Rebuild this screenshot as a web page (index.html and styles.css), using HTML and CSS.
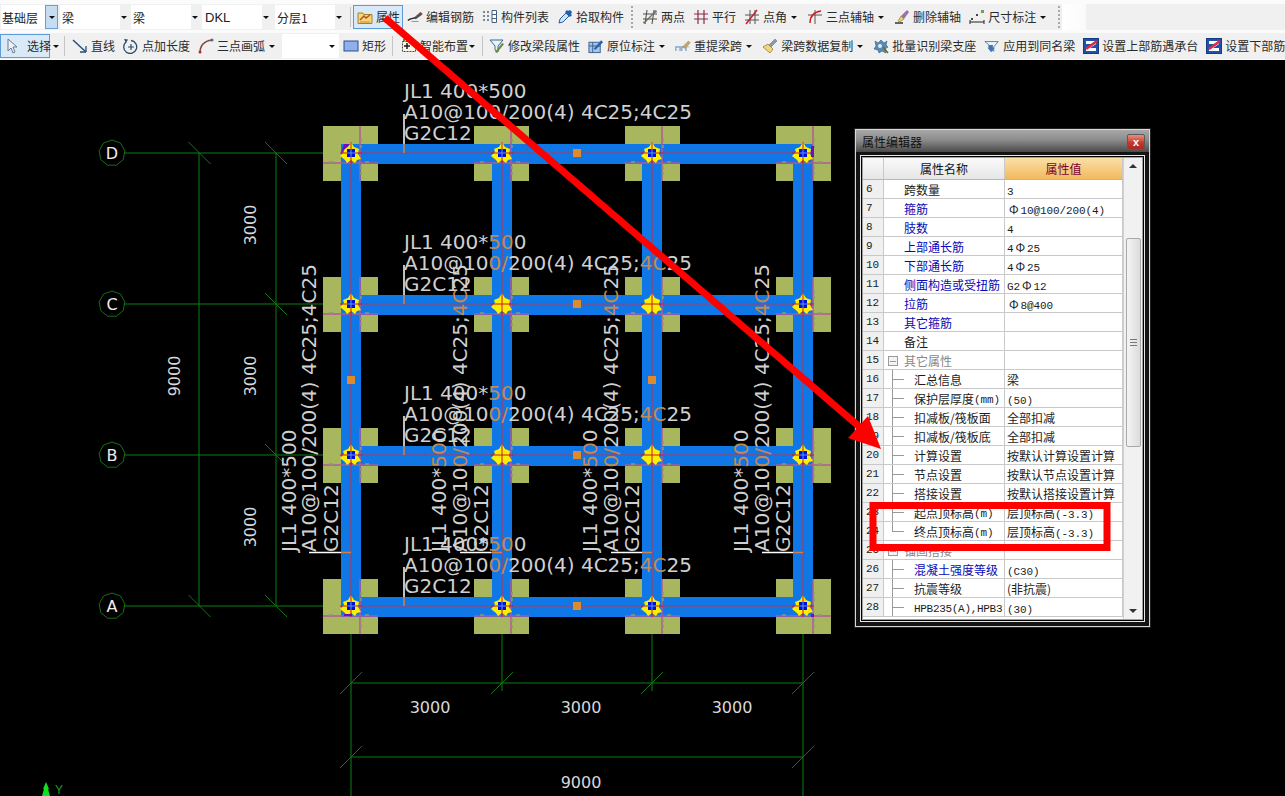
FILE: index.html
```html
<!DOCTYPE html>
<html lang="zh">
<head>
<meta charset="utf-8">
<title>属性编辑器</title>
<link rel="stylesheet" href="styles.css">
</head>
<body>
<svg class="defs" width="0" height="0" aria-hidden="true">
  <defs>
    <symbol id="i-prop" viewBox="0 0 16 16"><path d="M1 4h5l1 1.500h8v9H1z" fill="#f5d67a" stroke="#a8802c"/><path d="M3 11l4-4 2 2 4-3" fill="none" stroke="#b5541a" stroke-width="1.500"/><path d="M3 13h10" stroke="#d9a441" stroke-width="1.500"/></symbol>
    <symbol id="i-rebar" viewBox="0 0 18 16"><path d="M1 12c3-3 5-2 8-3" fill="none" stroke="#222" stroke-width="1.500"/><path d="M8 9l7-6 2 2-7 5z" fill="#555" stroke="#222" stroke-width=".6"/><path d="M15 3l2 2" stroke="#c33" stroke-width="1.500"/><path d="M5 13h8" stroke="#888"/></symbol>
    <symbol id="i-list" viewBox="0 0 16 16"><path d="M1 2h2v2H1zM1 6h2v2H1zM1 10h2v2H1zM5 2h2v2H5zM5 6h2v2H5zM5 10h2v2H5z" fill="#7a8a9a"/><path d="M10 1.500h4.500v12H10zM10 5.500h4.500M10 9.500h4.500" fill="#fff" stroke="#44607c"/></symbol>
    <symbol id="i-pick" viewBox="0 0 16 16"><path d="M2 14l1-4 6-6 3 3-6 6z" fill="#cfe4f7" stroke="#2a5d9c"/><path d="M8 3l5 5 2-2-1-1 1-2-2-2-2 1-1-1z" fill="#1f5fae"/></symbol>
    <symbol id="i-two" viewBox="0 0 16 16"><path d="M1 5h14M1 10h14M5 1l-2 14M12 1l-2 14" stroke="#4a4a4a" fill="none"/><path d="M2 14L14 2" stroke="#7a6a5a" stroke-width="1.200"/><circle cx="2.500" cy="13.500" r="1.300" fill="#777"/><circle cx="13.500" cy="2.500" r="1.300" fill="#777"/></symbol>
    <symbol id="i-par" viewBox="0 0 16 16"><path d="M1 5h14M1 10h14M5 1v14M11 1v14" stroke="#8a2a4a" stroke-width="1.200" fill="none"/></symbol>
    <symbol id="i-ang" viewBox="0 0 16 16"><path d="M1 6h14M1 11h14M6 1v14M11 1v14" stroke="#555" fill="none"/><path d="M2 15L13 1" stroke="#c0202a" stroke-width="1.500"/></symbol>
    <symbol id="i-tri" viewBox="0 0 16 16"><path d="M1 6h14M8 1v14" stroke="#555" fill="none"/><path d="M3 14C3 7 7 3 14 2" stroke="#d02020" stroke-width="1.500" fill="none"/></symbol>
    <symbol id="i-del" viewBox="0 0 16 16"><path d="M1 14h8" stroke="#333" stroke-width="1.500"/><path d="M4 12l3-5 3 3-4 3z" fill="#e8d070" stroke="#8a7030" stroke-width=".6"/><path d="M7 7l6-6 2 2-5 7z" fill="#9a70b0"/></symbol>
    <symbol id="i-dim" viewBox="0 0 16 16"><path d="M1 11v4M15 11v4M1 13h14" stroke="#222" fill="none"/><path d="M2 9h2v2H2zM7 5h2v2H7z" fill="#444"/><path d="M12 1h3v3h-3z" fill="#7a9a5a"/></symbol>
    <symbol id="i-sel" viewBox="0 0 16 16"><path d="M4 1v12l3-3 2 5 2-1-2-5h4z" fill="#eef2f8" stroke="#6a7a8e"/></symbol>
    <symbol id="i-line" viewBox="0 0 16 16"><path d="M1 2l13 12" stroke="#24507c" stroke-width="1.500"/><path d="M14 14v-6M14 14H8" stroke="#24507c" stroke-width="1.300" fill="none"/></symbol>
    <symbol id="i-plus" viewBox="0 0 16 16"><path d="M3 4a6.500 6.500 0 1 0 5-1.500" fill="none" stroke="#2a4a6c" stroke-width="1.300"/><path d="M1 1l4 .5L3 5z" fill="#2a4a6c"/><path d="M8 6v6M5 9h6" stroke="#2a4a6c" stroke-width="1.200"/></symbol>
    <symbol id="i-arc" viewBox="0 0 16 16"><path d="M2 15C2 8 6 3 14 2" fill="none" stroke="#8a4a3a" stroke-width="1.500"/><circle cx="2" cy="14" r="1.500" fill="#b03030"/><circle cx="14" cy="2" r="1.500" fill="#4a6a9a"/></symbol>
    <symbol id="i-rect" viewBox="0 0 16 16"><rect x="1" y="3" width="14" height="10" fill="#8fb0e8" stroke="#2a4f96"/></symbol>
    <symbol id="i-smart" viewBox="0 0 16 16"><rect x="1.500" y="3.500" width="13" height="10" fill="#f6f6e8" stroke="#444" stroke-dasharray="2 1"/><path d="M6 5v6M3 8h6" stroke="#1a1a1a" stroke-width="1.500"/><path d="M2 1h2v2H2z" fill="#6a8a3a"/></symbol>
    <symbol id="i-fun" viewBox="0 0 16 16"><path d="M1 2h13L9 8v6L6 12V8z" fill="#e8f2fa" stroke="#3a6a8a"/><path d="M6 14l7-9 2 1-7 9z" fill="#6a8a4a"/></symbol>
    <symbol id="i-org" viewBox="0 0 17 16"><rect x="1" y="4" width="12" height="11" fill="#a8c4e8" stroke="#3a5f8e"/><path d="M1 8h12M5 4v11" stroke="#3a5f8e"/><path d="M6 11l8-9 2 2-8 8z" fill="#2a62b0"/></symbol>
    <symbol id="i-span" viewBox="0 0 19 16"><path d="M1 14V9h5v5M8 14V9h5v5" fill="none" stroke="#7aa0c8" stroke-width="1.500"/><path d="M1 9h16" stroke="#9ab4d0"/><path d="M9 9l7-7 2 2-6 7z" fill="#c8a868" stroke="#8a7040" stroke-width=".5"/></symbol>
    <symbol id="i-brush" viewBox="0 0 16 16"><path d="M1 9l5-3 5 5-3 4z" fill="#f0d878" stroke="#8a7030" stroke-width=".7"/><path d="M7 7l6-6 2 2-6 6z" fill="#8a9aa8" stroke="#5a6a78" stroke-width=".5"/></symbol>
    <symbol id="i-batch" viewBox="0 0 16 16"><path d="M2 3l3 2 3-3 3 3 3-2-1 4 2 2-3 2 1 4-4-2-3 2-1-3-4-1 2-3z" fill="#5a8ab0" stroke="#2f5f86" stroke-width=".6"/><path d="M10 9l5 6" stroke="#6a6a2a" stroke-width="1.500"/><circle cx="7" cy="8" r="2" fill="#dcebf5"/></symbol>
    <symbol id="i-same" viewBox="0 0 18 16"><path d="M1 3h15L11 9v5L8 12V9z" fill="#eaf2f8" stroke="#4a7a9a"/><path d="M5 7h5v3h2l-4 5-4-5h1z" fill="#3f74b8"/></symbol>
    <symbol id="i-z" viewBox="0 0 16 16"><rect x=".5" y=".5" width="15" height="15" fill="#1f52a8" stroke="#163c80"/><path d="M3 3h10v3L7 10h6v3H3v-3l6-4H3z" fill="#fff"/><path d="M3 11L14 3" stroke="#e0283c" stroke-width="2.500"/></symbol>
    <polygon id="ring" points="0,-13 8.400,-10 12.800,-2.300 11.300,6.500 4.400,12.200 -4.400,12.200 -11.300,6.500 -12.800,-2.300 -8.400,-10" class="ring"/>
    <g id="tick"><path d="M-11 -11L11 11" class="thin"/></g>
    <g id="tock"><path d="M-11 11L11 -11" class="thin"/></g>
    <g id="pad">
      <rect x="-28" y="-27" width="55" height="55" class="pad"/>
    </g>
    <g id="wire">
      <path d="M-28 10H27M9 -27V28" class="wire"/>
      <path d="M-22 9h4M14 9h4M10 -14v3M10 -8v3M10 13v3M10 19v3" class="crumbs"/>
    </g>
    <g id="star">
      <polygon points="0,-11 3,-6 8,-4 7,1 10,6 6,7 4,10 0,7 -4,10 -6,7 -11,3 -7,-1 -8,-4 -3,-6" class="star"/>
      <path d="M-11 0H11M0 -11V11" class="core"/>
    </g>
    <g id="starb">
      <use href="#star"/>
      <rect x="-4" y="-4" width="8" height="8" class="blue"/>
      <path d="M-4 0H4M0 -4V4" class="core-in"/>
    </g>
  </defs>
</svg>

<header class="toolbars">
  <div class="bar bar-top">
    <div class="combo combo-first"><span>基础层</span><b class="drop"><i class="caret"></i></b></div>
    <div class="combo"><span>梁</span><i class="caret"></i></div>
    <div class="combo"><span>梁</span><i class="caret"></i></div>
    <div class="combo"><span class="lat">DKL</span><i class="caret"></i></div>
    <div class="combo combo-last"><span>分层1</span><i class="caret"></i></div>
    <i class="sep sep-top"></i>
    <div class="tool on"><svg class="ico"><use href="#i-prop"/></svg><span>属性</span></div>
    <div class="tool"><svg class="ico"><use href="#i-rebar"/></svg><span>编辑钢筋</span></div>
    <div class="tool"><svg class="ico"><use href="#i-list"/></svg><span>构件列表</span></div>
    <div class="tool"><svg class="ico"><use href="#i-pick"/></svg><span>拾取构件</span></div>
    <i class="grip"></i>
    <div class="tool"><svg class="ico"><use href="#i-two"/></svg><span>两点</span></div>
    <div class="tool"><svg class="ico"><use href="#i-par"/></svg><span>平行</span></div>
    <div class="tool"><svg class="ico"><use href="#i-ang"/></svg><span>点角</span><i class="caret"></i></div>
    <div class="tool"><svg class="ico"><use href="#i-tri"/></svg><span>三点辅轴</span><i class="caret"></i></div>
    <div class="tool"><svg class="ico"><use href="#i-del"/></svg><span>删除辅轴</span></div>
    <div class="tool"><svg class="ico"><use href="#i-dim"/></svg><span>尺寸标注</span><i class="caret"></i></div>
    <i class="grip grip-end"></i>
    <i class="blank"></i>
  </div>
  <div class="bar bar-low">
    <div class="tool on tool-sel"><svg class="ico"><use href="#i-sel"/></svg><span>选择</span></div>
    <i class="caret caret-sel"></i>
    <i class="sep sep-a"></i>
    <div class="tool"><svg class="ico"><use href="#i-line"/></svg><span>直线</span></div>
    <div class="tool"><svg class="ico"><use href="#i-plus"/></svg><span>点加长度</span></div>
    <div class="tool"><svg class="ico"><use href="#i-arc"/></svg><span>三点画弧</span><i class="caret"></i></div>
    <div class="combo combo-mini"><i class="caret"></i></div>
    <div class="tool"><svg class="ico"><use href="#i-rect"/></svg><span>矩形</span></div>
    <i class="sep sep-b"></i>
    <div class="tool tool-tight"><svg class="ico"><use href="#i-smart"/></svg><span>智能布置</span><i class="caret"></i></div>
    <i class="sep sep-c"></i>
    <div class="tool"><svg class="ico"><use href="#i-fun"/></svg><span>修改梁段属性</span></div>
    <div class="tool"><svg class="ico"><use href="#i-org"/></svg><span>原位标注</span><i class="caret"></i></div>
    <div class="tool"><svg class="ico"><use href="#i-span"/></svg><span>重提梁跨</span><i class="caret"></i></div>
    <div class="tool"><svg class="ico"><use href="#i-brush"/></svg><span>梁跨数据复制</span><i class="caret"></i></div>
    <div class="tool"><svg class="ico"><use href="#i-batch"/></svg><span>批量识别梁支座</span></div>
    <div class="tool"><svg class="ico"><use href="#i-same"/></svg><span>应用到同名梁</span></div>
    <div class="tool"><svg class="ico"><use href="#i-z"/></svg><span>设置上部筋遇承台</span></div>
    <div class="tool"><svg class="ico"><use href="#i-z"/></svg><span>设置下部筋遇承台</span></div>
  </div>
</header>

<main class="canvas">
  <svg class="plan" width="1285" height="736" viewBox="0 60 1285 736">
    <!-- axes -->
    <path class="axis" d="M124 153H351M124 304H351M124 455H351M124 606H351M199 153V606M276 153V606"/>
    <path class="axis" d="M351 606V796M502 606V691M652 606V691M803 606V796M351 683H803M351 757H803"/>
    <use href="#ring" x="112" y="153"/><use href="#ring" x="112" y="304"/><use href="#ring" x="112" y="455"/><use href="#ring" x="112" y="606"/>
    <use href="#tick" x="199.500" y="153"/><use href="#tick" x="276" y="153"/><use href="#tick" x="276" y="304"/><use href="#tick" x="276" y="455"/><use href="#tick" x="199.500" y="606"/><use href="#tick" x="276" y="606"/>
    <use href="#tock" x="351" y="683"/><use href="#tock" x="502" y="683"/><use href="#tock" x="652" y="683"/><use href="#tock" x="803" y="683"/><use href="#tock" x="351" y="757"/><use href="#tock" x="803" y="757"/>
    <text class="tag" x="112" y="159">D</text><text class="tag" x="112" y="310">C</text><text class="tag" x="112" y="461">B</text><text class="tag" x="112" y="612">A</text>
    <text class="dim" x="430" y="713">3000</text><text class="dim" x="581" y="713">3000</text><text class="dim" x="732" y="713">3000</text><text class="dim" x="581" y="788">9000</text>
    <text class="dim" transform="rotate(-90 256 225)" x="256" y="225">3000</text><text class="dim" transform="rotate(-90 256 376)" x="256" y="376">3000</text><text class="dim" transform="rotate(-90 256 527)" x="256" y="527">3000</text><text class="dim" transform="rotate(-90 180 376)" x="180" y="376">9000</text>

    <!-- pads -->
    <use href="#pad" x="351" y="153"/><use href="#pad" x="502" y="153"/><use href="#pad" x="653" y="153"/><use href="#pad" x="804" y="153"/>
    <use href="#pad" x="351" y="304"/><use href="#pad" x="502" y="304"/><use href="#pad" x="653" y="304"/><use href="#pad" x="804" y="304"/>
    <use href="#pad" x="351" y="455"/><use href="#pad" x="502" y="455"/><use href="#pad" x="653" y="455"/><use href="#pad" x="804" y="455"/>
    <use href="#pad" x="351" y="606"/><use href="#pad" x="502" y="606"/><use href="#pad" x="653" y="606"/><use href="#pad" x="804" y="606"/>

    <!-- beams -->
    <path class="beam" d="M341 154H813M341 305H813M341 456H813M341 607H813M351 144V617M502 144V617M652 144V617M803 144V617"/>
    <path class="mid" d="M341 153H813M341 304H813M341 455H813M341 606H813M351 144V617M502 144V617M652 144V617M803 144V617"/>
    <use href="#wire" x="351" y="153"/><use href="#wire" x="502" y="153"/><use href="#wire" x="653" y="153"/><use href="#wire" x="804" y="153"/>
    <use href="#wire" x="351" y="304"/><use href="#wire" x="502" y="304"/><use href="#wire" x="653" y="304"/><use href="#wire" x="804" y="304"/>
    <use href="#wire" x="351" y="455"/><use href="#wire" x="502" y="455"/><use href="#wire" x="653" y="455"/><use href="#wire" x="804" y="455"/>
    <use href="#wire" x="351" y="606"/><use href="#wire" x="502" y="606"/><use href="#wire" x="653" y="606"/><use href="#wire" x="804" y="606"/>

    <!-- midpoints -->
    <path class="node" d="M573 149h8v8h-8zM573 300h8v8h-8zM573 451h8v8h-8zM573 602h8v8h-8zM347 376h8v8h-8zM648 376h8v8h-8z"/>

    <!-- joints -->
    <use href="#starb" x="351" y="153"/><use href="#starb" x="502" y="153"/><use href="#starb" x="652" y="153"/><use href="#starb" x="803" y="153"/>
    <use href="#starb" x="351" y="304"/><use href="#star" x="502" y="304"/><use href="#star" x="652" y="304"/><use href="#starb" x="803" y="304"/>
    <use href="#starb" x="351" y="455"/><use href="#star" x="502" y="455"/><use href="#star" x="652" y="455"/><use href="#starb" x="803" y="455"/>
    <use href="#starb" x="351" y="606"/><use href="#starb" x="502" y="606"/><use href="#starb" x="652" y="606"/><use href="#starb" x="803" y="606"/>
    <path class="purple" d="M341 153l9-9h-6zM811 146h3v11h-3zM344 614h8v2h-8zM811 614h3v3h-3z"/>

    <!-- leader ticks -->
    <path class="lead" d="M404 114V144M404 265V295M404 416V446M404 567V597M309 552.500H341M460 552.500H491M611 552.500H642M762 552.500H793"/>
    <path class="lead-o" d="M404 144V153M404 295V304M404 446V455M404 597V606M341 552.500H351M491 552.500H502M642 552.500H652M793 552.500H803"/>

    <!-- horizontal annotations -->
    <text class="note" x="404" y="98">JL1 400*500</text>
    <text class="note" x="404" y="119">A10@100/200(4) 4C25;4C25</text>
    <text class="note" x="404" y="140">G2C12</text>
    <text class="note" x="404" y="249">JL1 400*<tspan class="hit">50</tspan>0</text>
    <text class="note" x="404" y="270">A10@10<tspan class="hit">0/</tspan>200(4) 4C25;<tspan class="hit">4C</tspan>25</text>
    <text class="note" x="404" y="291">G2C12</text>
    <text class="note" x="404" y="400">JL1 400*<tspan class="hit">50</tspan>0</text>
    <text class="note" x="404" y="421">A10@10<tspan class="hit">0/</tspan>200(4) 4C25;<tspan class="hit">4C</tspan>25</text>
    <text class="note" x="404" y="442">G2C12</text>
    <text class="note" x="404" y="551">JL1 400*<tspan class="hit">50</tspan>0</text>
    <text class="note" x="404" y="572">A10@10<tspan class="hit">0/</tspan>200(4) 4C25;<tspan class="hit">4C</tspan>25</text>
    <text class="note" x="404" y="593">G2C12</text>

    <!-- vertical annotations -->
    <text class="note" transform="rotate(-90 296 552)" x="296" y="552">JL1 400*500</text>
    <text class="note" transform="rotate(-90 316 552)" x="316" y="552">A10@100/200(4) 4C25;4C25</text>
    <text class="note" transform="rotate(-90 338 552)" x="338" y="552">G2C12</text>
    <text class="note" transform="rotate(-90 446 552)" x="446" y="552">JL1 400*<tspan class="hit">50</tspan>0</text>
    <text class="note" transform="rotate(-90 467 552)" x="467" y="552">A10@10<tspan class="hit">0/</tspan>200(4) 4C25;<tspan class="hit">4C</tspan>25</text>
    <text class="note" transform="rotate(-90 488 552)" x="488" y="552">G2C12</text>
    <text class="note" transform="rotate(-90 597 552)" x="597" y="552">JL1 400*<tspan class="hit">50</tspan>0</text>
    <text class="note" transform="rotate(-90 618 552)" x="618" y="552">A10@10<tspan class="hit">0/</tspan>200(4) 4C25;<tspan class="hit">4C</tspan>25</text>
    <text class="note" transform="rotate(-90 639 552)" x="639" y="552">G2C12</text>
    <text class="note" transform="rotate(-90 748 552)" x="748" y="552">JL1 400*<tspan class="hit">50</tspan>0</text>
    <text class="note" transform="rotate(-90 769 552)" x="769" y="552">A10@10<tspan class="hit">0/</tspan>200(4) 4C25;<tspan class="hit">4C</tspan>25</text>
    <text class="note" transform="rotate(-90 790 552)" x="790" y="552">G2C12</text>

    <!-- coordinate marker -->
    <polygon class="mark" points="46,782 49,789 48,789 50,796 42,796 44,789 43,789"/>
    <text class="ylabel" x="55" y="794">Y</text>
  </svg>

  <section class="dialog">
    <div class="dialog-title"><span>属性编辑器</span><b class="close">x</b></div>
    <div class="dialog-frame">
      <div class="dialog-body">
        <div class="grid">
          <div class="row head"><span class="num"></span><span class="name">属性名称</span><span class="val">属性值</span></div>
          <div class="row"><span class="num">6</span><span class="name">跨数量</span><span class="val"><em>3</em></span></div>
          <div class="row"><span class="num">7</span><span class="name link">箍筋</span><span class="val"><em><b class="rb">Φ</b>10@100/200(4)</em></span></div>
          <div class="row"><span class="num">8</span><span class="name link">肢数</span><span class="val"><em>4</em></span></div>
          <div class="row"><span class="num">9</span><span class="name link">上部通长筋</span><span class="val"><em>4<b class="rb">Φ</b>25</em></span></div>
          <div class="row"><span class="num">10</span><span class="name link">下部通长筋</span><span class="val"><em>4<b class="rb">Φ</b>25</em></span></div>
          <div class="row"><span class="num">11</span><span class="name link">侧面构造或受扭筋</span><span class="val"><em>G2<b class="rb">Φ</b>12</em></span></div>
          <div class="row"><span class="num">12</span><span class="name link">拉筋</span><span class="val"><em><b class="rb">Φ</b>8@400</em></span></div>
          <div class="row"><span class="num">13</span><span class="name link">其它箍筋</span><span class="val"></span></div>
          <div class="row"><span class="num">14</span><span class="name">备注</span><span class="val"></span></div>
          <div class="row"><span class="num">15</span><span class="name group"><i class="fold"></i>其它属性</span><span class="val"></span></div>
          <div class="row"><span class="num">16</span><span class="name leaf"><i class="branch"></i>汇总信息</span><span class="val">梁</span></div>
          <div class="row"><span class="num">17</span><span class="name leaf"><i class="branch"></i>保护层厚度<em>(mm)</em></span><span class="val"><em>(50)</em></span></div>
          <div class="row"><span class="num">18</span><span class="name leaf"><i class="branch"></i>扣减板/筏板面</span><span class="val">全部扣减</span></div>
          <div class="row"><span class="num">19</span><span class="name leaf"><i class="branch"></i>扣减板/筏板底</span><span class="val">全部扣减</span></div>
          <div class="row"><span class="num">20</span><span class="name leaf"><i class="branch"></i>计算设置</span><span class="val">按默认计算设置计算</span></div>
          <div class="row"><span class="num">21</span><span class="name leaf"><i class="branch"></i>节点设置</span><span class="val">按默认节点设置计算</span></div>
          <div class="row"><span class="num">22</span><span class="name leaf"><i class="branch"></i>搭接设置</span><span class="val">按默认搭接设置计算</span></div>
          <div class="row"><span class="num">23</span><span class="name leaf"><i class="branch"></i>起点顶标高<em>(m)</em></span><span class="val">层顶标高<em>(-3.3)</em></span></div>
          <div class="row"><span class="num">24</span><span class="name leaf"><i class="branch branch-end"></i>终点顶标高<em>(m)</em></span><span class="val">层顶标高<em>(-3.3)</em></span></div>
          <div class="row"><span class="num">25</span><span class="name group"><i class="fold"></i>锚固搭接</span><span class="val"></span></div>
          <div class="row"><span class="num">26</span><span class="name leaf link"><i class="branch"></i>混凝土强度等级</span><span class="val"><em>(C30)</em></span></div>
          <div class="row"><span class="num">27</span><span class="name leaf"><i class="branch"></i>抗震等级</span><span class="val">(非抗震)</span></div>
          <div class="row"><span class="num">28</span><span class="name leaf"><i class="branch"></i><em class="tight">HPB235(A),HPB3</em></span><span class="val"><em>(30)</em></span></div>
        </div>
        <div class="scroll">
          <i class="arrow-up"></i>
          <div class="track"><div class="thumb"><i class="ridges"></i></div></div>
          <i class="arrow-down"></i>
        </div>
      </div>
    </div>
  </section>
</main>

<svg class="overlay" width="1285" height="796" viewBox="0 0 1285 796" aria-hidden="true">
  <path class="arrow-shaft" d="M385 18L862 429"/>
  <polygon class="arrow-head" points="881,449 848,438 868,416"/>
  <rect class="callout" x="873" y="505.500" width="234" height="42"/>
</svg>
</body>
</html>
```
FILE: styles.css
```css
* { box-sizing: border-box; }
html, body { margin: 0; padding: 0; }
body {
  width: 1285px;
  height: 796px;
  overflow: hidden;
  position: relative;
  background: #000;
  font-family: "Noto Sans CJK SC", "Liberation Sans", sans-serif;
  font-size: 12px;
  color: #222;
}
.defs { display: block; height: 0; }

.toolbars { height: 60px; background: #fbfbfb; display: flex; flex-direction: column; overflow: hidden; }
.bar { display: flex; align-items: center; background: #f0f0f0; white-space: nowrap; }
.bar-top { height: 26px; margin-top: 4px; padding-left: 1px; }
.bar-low { height: 26px; margin-top: 3px; }

.combo { width: 71px; height: 24px; flex: none; display: flex; align-items: center; padding: 0 4px 0 2px; justify-content: space-between; background: linear-gradient(to right, #fff 84%, #f0f0f0 84%); }
.combo-first { width: 57px; padding: 0; margin-right: 2px; background: #fff; }
.combo-first span { padding-left: 1px; }
.combo-last { margin-left: 2px; }
.combo span { flex: 1; }
.combo .lat { font-family: "Liberation Sans", sans-serif; font-size: 13px; padding-left: 1px; }
.drop { width: 13px; height: 24px; display: flex; align-items: center; justify-content: center; background: #c6dcf2; border: 1px solid #6aa0d8; }
.combo-mini { width: 57px; justify-content: flex-end; padding-right: 4px; margin-left: 1px; background: #fff; }

.caret { display: inline-block; width: 0; height: 0; border-left: 3px solid transparent; border-right: 3px solid transparent; border-top: 3px solid #111; flex: none; }
.sep { width: 1px; height: 20px; background: #c4c4c4; margin: 0 2px; flex: none; }
.sep-top { margin: 0 2px 0 4px; }
.grip { width: 4px; height: 22px; margin: 0 3px 0 3px; flex: none; background: repeating-linear-gradient(to bottom, #a8a8a8 0 2px, transparent 2px 4px); background-size: 2px 100%; background-repeat: no-repeat; }
.grip-end { margin-left: 6px; margin-right: 0; }
.blank { width: 24px; height: 26px; background: linear-gradient(to right, #fff, #fafafa); }

.tool { display: flex; align-items: center; height: 24px; padding: 0 4px; flex: none; line-height: 24px; color: #2b2b2b; }
.tool .ico { width: 16px; height: 16px; margin-right: 3px; flex: none; overflow: visible; }
.tool .caret { margin-left: 4px; margin-right: 2px; }
.tool.on { background: #d9e9f8; border: 1px solid #5b9bd8; padding: 0 3px; }
.tool-sel { width: 50px; padding-left: 1px; }
.tool-sel span { margin-left: 4px; }
.caret-sel { margin: 0 0 0 3px; }
.sep-a { margin: 0 3px 0 5px; }
.sep-b { margin: 0 4px 0 2px; }
.sep-c { margin: 0 2px 0 3px; }
.tool-tight .caret { margin-left: 1px; margin-right: 0; }
.bar-top .tool.on { width: 50px; }

.canvas { position: relative; width: 1285px; height: 736px; background: #000; }
.plan { display: block; }
.ring { fill: none; stroke: #1c8a1c; stroke-width: .8; }
.thin { stroke: #157515; stroke-width: 1; fill: none; }
.axis { stroke: #0b8010; stroke-width: 1; fill: none; }
.tag { font: 16px "DejaVu Sans", sans-serif; fill: #eee; text-anchor: middle; }
.dim { font: 16px "DejaVu Sans", sans-serif; fill: #d8d8d8; text-anchor: middle; }
.pad { fill: #a8b75e; }
.beam { stroke: #0f77e6; stroke-width: 20; fill: none; }
.mid { stroke: #b33a5a; stroke-width: 1.200; fill: none; }
.wire { stroke: #b05a9a; stroke-width: 1.500; fill: none; }
.crumbs { stroke: #8a9a70; stroke-width: 1.500; fill: none; }
.node { fill: #e08a30; }
.star { fill: #ffee00; }
.core { stroke: #c01830; stroke-width: 1; fill: none; }
.core-in { stroke: #5a9ae8; stroke-width: 1; fill: none; }
.blue { fill: #0010d8; }
.purple { fill: #6a10c0; }
.lead { stroke: #fff; stroke-width: 1.500; fill: none; }
.lead-o { stroke: #d8803a; stroke-width: 1.500; fill: none; }
.note { font: 20px "DejaVu Sans", sans-serif; fill: #d0d0d0; }
.hit { fill: #c08a50; }
.mark { fill: #10e020; }
.ylabel { font: 12px "Liberation Sans", sans-serif; fill: #10a020; }

.dialog { position: absolute; left: 855px; top: 69px; width: 295px; height: 498px; background: #141414; border: 1px solid #d8d8d8; outline: 1px solid #222; display: flex; flex-direction: column; }
.dialog-title { height: 22px; padding: 0 4px 0 6px; display: flex; align-items: center; justify-content: space-between; background: linear-gradient(to bottom, #a8a8a8, #8c8c8c 45%, #4a4a4a); color: #101010; }
.close { width: 18px; height: 16px; margin-top: 2px; display: flex; align-items: center; justify-content: center; font: bold 11px "Liberation Sans", sans-serif; color: #fff; background: linear-gradient(to bottom, #e89080, #c8382c 55%, #a82820); border: 1px solid #5a5a5a; border-radius: 2px; }
.dialog-frame { flex: 1; margin: 3px 4px 4px 4px; border: 1px solid #e8e8e8; padding: 1px; background: #000; display: flex; }
.dialog-body { flex: 1; display: flex; background: #fff; border: 1px solid #a0a0a0; }

.grid { width: 260px; flex: none; overflow: hidden; }
.row { display: grid; grid-template-columns: 21px 121px 118px; height: 19px; border-bottom: 1px solid #c9c9c9; line-height: 20px; white-space: nowrap; }
.row span { border-right: 1px solid #c9c9c9; overflow: hidden; display: block; }
.num { background: #f0f0f0; font: 11px/19px "Liberation Mono", monospace; padding-left: 3px; color: #222; }
.name { padding-left: 20px; color: #1c1c1c; }
.link { color: #0808b8; }
.group { color: #888; padding: 2px 0 0 4px; display: flex !important; align-items: center; }
.leaf { padding-left: 8px; display: flex !important; }
.leaf em { margin-top: 2px; }
.val { padding-left: 2px; color: #1c1c1c; }
em { font: 11px/19px "Liberation Mono", monospace; letter-spacing: -.1px; font-style: normal; }
.tight { letter-spacing: -.3px; }
.rb { font: 12px/19px "Noto Sans CJK SC", sans-serif; padding: 0 2px; }
.head { height: 22px; line-height: 21px; background: linear-gradient(to bottom, #fafafa, #e6e6e6); border-bottom: 1px solid #b8b8b8; }
.head .num { background: transparent; }
.head .name { padding: 0; text-align: center; color: #111; font-size: 12px; }
.head .val { padding: 0; text-align: center; color: #7a0030; background: linear-gradient(to bottom, #fbe0a8, #f2b95c); }

.fold { width: 10px; height: 10px; margin-right: 6px; border: 1px solid #999; background: linear-gradient(to bottom, #999, #999) center / 6px 1px no-repeat, #f4f4f4; flex: none; }
.branch { width: 22px; height: 19px; flex: none; background:
  linear-gradient(#999, #999) 0 0 / 1px 100% no-repeat,
  linear-gradient(#999, #999) 0 9px / 12px 1px no-repeat; }
.branch-end { background:
  linear-gradient(#999, #999) 0 0 / 1px 10px no-repeat,
  linear-gradient(#999, #999) 0 9px / 12px 1px no-repeat; }

.scroll { flex: 1; background: #f1f1f1; display: flex; flex-direction: column; align-items: center; padding-top: 6px; border-left: 1px solid #d0d0d0; }
.arrow-up { width: 0; height: 0; border-left: 4px solid transparent; border-right: 4px solid transparent; border-bottom: 4px solid #333; flex: none; }
.arrow-down { width: 0; height: 0; border-left: 4px solid transparent; border-right: 4px solid transparent; border-top: 4px solid #333; flex: none; margin-bottom: 6px; }
.track { flex: 1; width: 100%; padding: 70px 1px 0 2px; }
.thumb { height: 209px; border: 1px solid #a8a8a8; border-radius: 2px; background: linear-gradient(to right, #f4f4f4, #dcdcdc); display: flex; align-items: center; justify-content: center; }
.ridges { width: 7px; height: 7px; background: repeating-linear-gradient(to bottom, #777 0 1px, transparent 1px 3px); }

.overlay { position: absolute; left: 0; top: 0; pointer-events: none; }
.arrow-shaft { stroke: #f00; stroke-width: 7; fill: none; }
.arrow-head { fill: #f00; }
.callout { fill: none; stroke: #f00; stroke-width: 7; }
```
